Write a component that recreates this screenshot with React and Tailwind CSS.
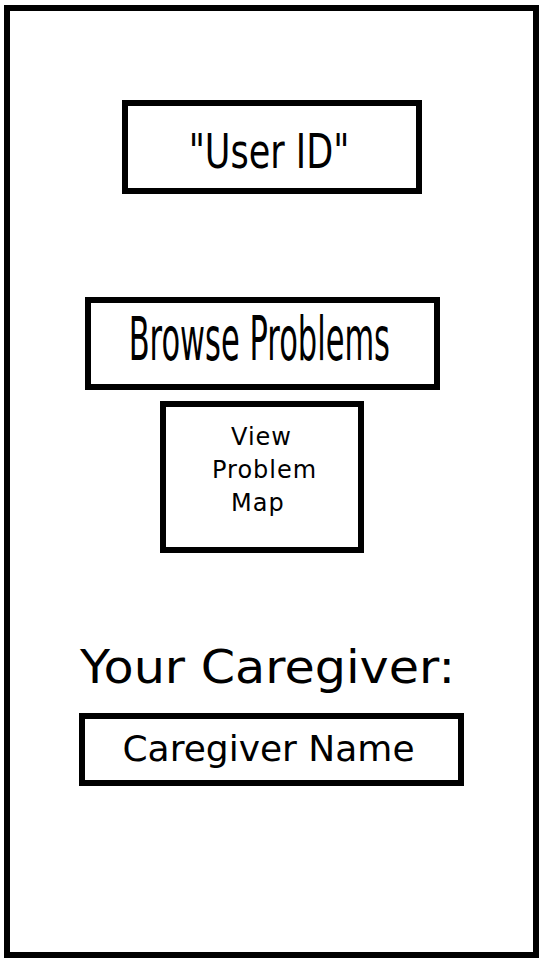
export default function App() {
  return (
    <div className="w-[540px] h-[960px] bg-white pt-[5px] pl-[4px] font-['DejaVu_Sans',sans-serif] text-black overflow-hidden">
      <div className="w-[535px] h-[953px] border-[6px] border-black">
        {/* user id */}
        <div className="ml-[112px] mt-[89px] w-[300px] h-[94px] border-[6px] border-black flex justify-center items-start pt-[21px] pr-[7px]">
          <span className="block shrink-0 whitespace-nowrap text-[48px] leading-none scale-x-[0.73]">"User ID"</span>
        </div>

        {/* browse */}
        <div className="ml-[75px] mt-[103px] w-[355px] h-[93px] border-[6px] border-black flex justify-center items-start pt-[5px] pr-[7px]">
          <span className="block shrink-0 whitespace-nowrap text-[61px] leading-none scale-x-[0.5]">Browse Problems</span>
        </div>

        {/* map */}
        <div className="ml-[150px] mt-[11px] w-[204px] h-[152px] border-[6px] border-black flex flex-col items-start pt-[14px] text-[24px] leading-[33px] tracking-[1px]">
          <span className="ml-[65px]">View</span>
          <span className="ml-[46px]">Problem</span>
          <span className="ml-[65px]">Map</span>
        </div>

        <h2 className="ml-[70px] mt-[91px] w-max origin-left scale-x-[1.07] text-[46px] leading-none whitespace-nowrap">Your Caregiver:</h2>

        <div className="ml-[69px] mt-[23px] w-[385px] h-[73px] border-[6px] border-black flex justify-center items-start pt-[12px] pr-[6px]">
          <span className="whitespace-nowrap text-[36px] leading-none">Caregiver Name</span>
        </div>
      </div>
    </div>
  );
}
